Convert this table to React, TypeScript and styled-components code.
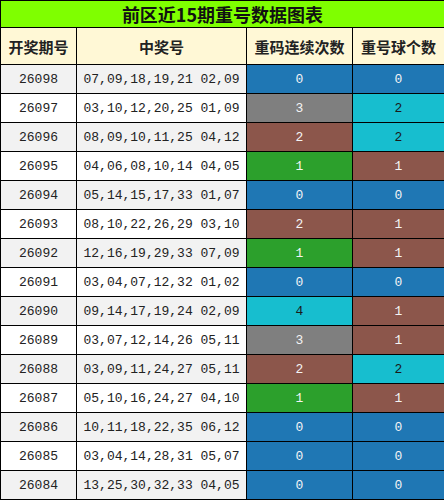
import styled, { createGlobalStyle } from "styled-components";

const GlobalStyle = createGlobalStyle`
  html, body {
    margin: 0;
    padding: 0;
    background: #ffffff;
  }
`;

type Draw = { period: string; numbers: string; streak: number; repeat: number };

const draws: Draw[] = [
  { period: "26098", numbers: "07,09,18,19,21 02,09", streak: 0, repeat: 0 },
  { period: "26097", numbers: "03,10,12,20,25 01,09", streak: 3, repeat: 2 },
  { period: "26096", numbers: "08,09,10,11,25 04,12", streak: 2, repeat: 2 },
  { period: "26095", numbers: "04,06,08,10,14 04,05", streak: 1, repeat: 1 },
  { period: "26094", numbers: "05,14,15,17,33 01,07", streak: 0, repeat: 0 },
  { period: "26093", numbers: "08,10,22,26,29 03,10", streak: 2, repeat: 1 },
  { period: "26092", numbers: "12,16,19,29,33 07,09", streak: 1, repeat: 1 },
  { period: "26091", numbers: "03,04,07,12,32 01,02", streak: 0, repeat: 0 },
  { period: "26090", numbers: "09,14,17,19,24 02,09", streak: 4, repeat: 1 },
  { period: "26089", numbers: "03,07,12,14,26 05,11", streak: 3, repeat: 1 },
  { period: "26088", numbers: "03,09,11,24,27 05,11", streak: 2, repeat: 2 },
  { period: "26087", numbers: "05,10,16,24,27 04,10", streak: 1, repeat: 1 },
  { period: "26086", numbers: "10,11,18,22,35 06,12", streak: 0, repeat: 0 },
  { period: "26085", numbers: "03,04,14,28,31 05,07", streak: 0, repeat: 0 },
  { period: "26084", numbers: "13,25,30,32,33 04,05", streak: 0, repeat: 0 },
];

const BLUE = "#1f77b4";
const GREEN = "#2ca02c";
const BROWN = "#8c564b";
const GRAY = "#7f7f7f";
const CYAN = "#17becf";

const streakColors = [BLUE, GREEN, BROWN, GRAY, CYAN];
const repeatColors = [BLUE, BROWN, CYAN];

const Table = styled.table`
  width: 444px;
  border-collapse: collapse;
  table-layout: fixed;
  font-family: "Liberation Mono", monospace;
`;

const TitleCell = styled.th`
  height: 26px;
  padding: 0;
  border: 1px solid #000;
  background: #7fff00;
  color: #111;
  font-family: "Noto Sans CJK SC", "Noto Sans", sans-serif;
  font-size: 18px;
  font-weight: 700;
  line-height: 24px;
  text-align: center;
`;

const HeadCell = styled.th`
  height: 36px;
  padding: 0;
  border: 1px solid #000;
  background: #fff8d6;
  color: #222;
  font-family: "Noto Sans CJK SC", "Noto Sans", sans-serif;
  font-size: 15px;
  font-weight: 700;
  text-align: center;
`;

const Row = styled.tr<{ $shaded: boolean }>`
  background: ${(p) => (p.$shaded ? "#f2f2f2" : "#ffffff")};
`;

const Cell = styled.td`
  height: 28px;
  padding: 0;
  border: 1px solid #000;
  color: #222;
  font-size: 13px;
  text-align: center;
  white-space: nowrap;
`;

const ColorCell = styled(Cell)<{ $bg: string }>`
  background: ${(p) => p.$bg};
  color: ${(p) => (p.$bg === CYAN ? "#1a1a1a" : "#f4f4f4")};
`;

export default function App() {
  return (
    <>
      <GlobalStyle />
      <Table>
        <colgroup>
          <col style={{ width: 76 }} />
          <col style={{ width: 170 }} />
          <col style={{ width: 106 }} />
          <col style={{ width: 92 }} />
        </colgroup>
        <thead>
          <tr>
            <TitleCell colSpan={4}>前区近15期重号数据图表</TitleCell>
          </tr>
          <tr>
            <HeadCell>开奖期号</HeadCell>
            <HeadCell>中奖号</HeadCell>
            <HeadCell>重码连续次数</HeadCell>
            <HeadCell>重号球个数</HeadCell>
          </tr>
        </thead>
        <tbody>
          {draws.map((d, i) => (
            <Row key={d.period} $shaded={i % 2 === 0}>
              <Cell>{d.period}</Cell>
              <Cell>{d.numbers}</Cell>
              <ColorCell $bg={streakColors[d.streak]}>{d.streak}</ColorCell>
              <ColorCell $bg={repeatColors[d.repeat]}>{d.repeat}</ColorCell>
            </Row>
          ))}
        </tbody>
      </Table>
    </>
  );
}
